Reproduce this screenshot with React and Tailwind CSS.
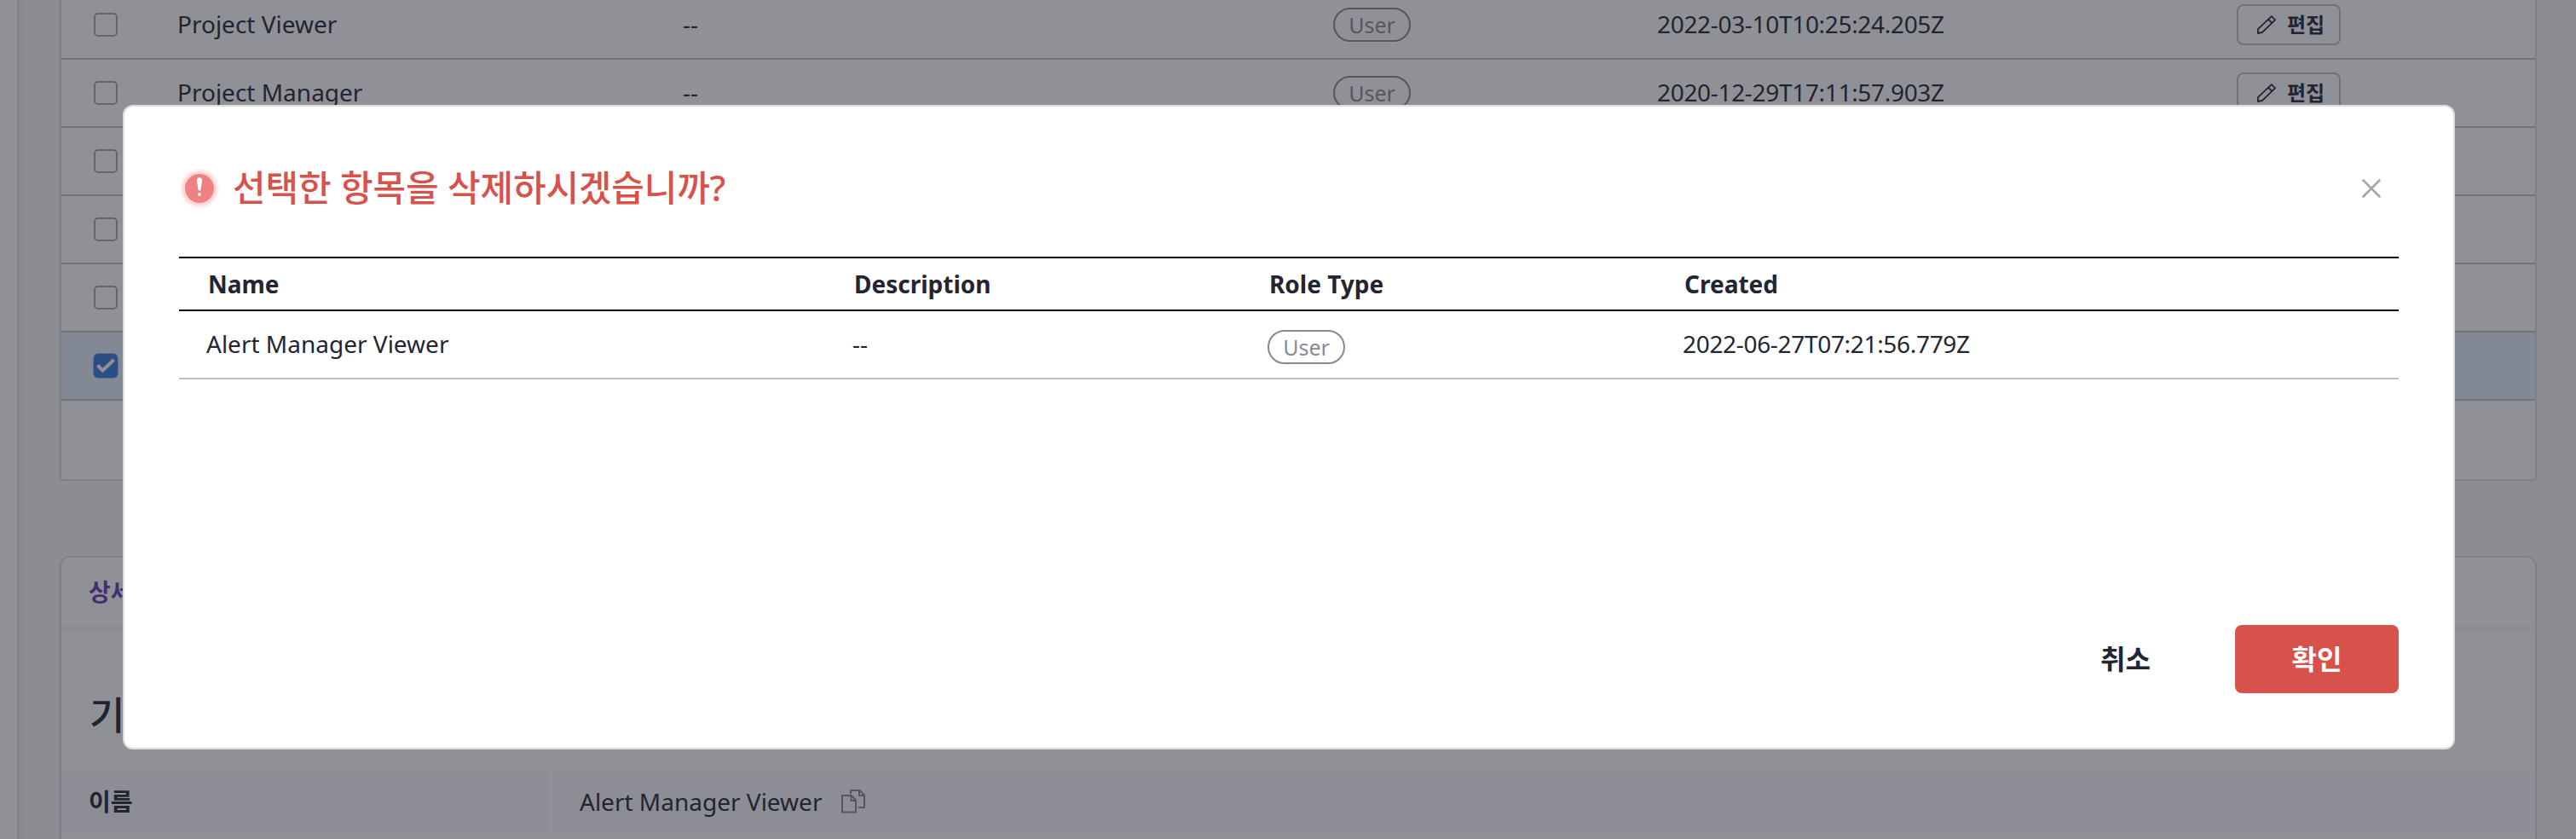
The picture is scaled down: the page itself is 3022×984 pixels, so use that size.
const Pencil = () => (
  <svg width="24" height="24" viewBox="0 0 24 24" fill="none" stroke="#232533" strokeWidth="1.8" strokeLinejoin="round" className="mb-px">
    <path d="M1.900 22v-4.800L17.800 2.100l4.300 4.300L7 20.900z" />
    <path d="M14 5.600l4.400 4.400" />
  </svg>
);

const Copy = () => (
  <svg width="28" height="28" viewBox="0 0 28 28" fill="none" stroke="#898995" strokeWidth="2">
    <path d="M1 7h11l5 5.500v14h-16z" />
    <path d="M11.500 7v6h5.500" />
    <path d="M11 5v-4h10.500l5.500 5.500v14.500h-7" />
    <path d="M21 1v6h6" />
  </svg>
);

const Alert = () => (
  <svg width="46" height="46" viewBox="0 0 46 46">
    <circle cx="23" cy="23" r="23" fill="#fdefef" />
    <circle cx="23" cy="23" r="20" fill="#fad6d6" />
    <circle cx="23" cy="23" r="17" fill="#ee8282" />
    <path d="M23 10.200c2 0 3.300 1.500 3.100 3.600l-1.500 10.200c-.2 2-2.900 2-3.200 0l-1.500-10.200c-.2-2.100 1.100-3.600 3.100-3.600z" fill="#fff" />
    <circle cx="23" cy="30" r="1.900" fill="#fff" />
  </svg>
);

const Badge = () => (
  <span className="flex h-10 w-[91px] items-center justify-center rounded-full border-2 border-[#898995] text-[25px] leading-none text-[#898995]">
    User
  </span>
);

const Box = ({ checked }) =>
  checked ? (
    <span className="flex size-7 items-center justify-center rounded-[5px] bg-[#3878dc] shadow-[0_0_0_1px_#3878dc66]">
      <svg width="22" height="18" viewBox="0 0 22 18" fill="none" stroke="#fff" strokeWidth="4">
        <path d="M1.500 8.500l6 6L20.500 2" />
      </svg>
    </span>
  ) : (
    <span className="size-7 rounded-[5px] border-2 border-[#a5a5ae]" />
  );

const rows = [
  { name: "Project Viewer", created: "2022-03-10T10:25:24.205Z" },
  { name: "Project Manager", created: "2020-12-29T17:11:57.903Z" },
  {},
  {},
  {},
  { checked: true },
];

const Row = ({ name, created, checked }) => (
  <div className={"flex h-20 shrink-0 items-center border-b-2 border-[#bfc0c6] pl-[38px] " + (checked ? "bg-[#e2effb]" : "")}>
    <div className="flex w-[98px]">
      <Box checked={checked} />
    </div>
    {name && (
      <>
        <div className="w-[593px] pb-0.5">{name}</div>
        <div className="w-[763px] pb-0.5">--</div>
        <div className="w-[380px]"><Badge /></div>
        <div className="w-[680px] pb-0.5 tracking-[-0.32px]">{created}</div>
        <div className="flex h-12 w-[122px] items-center gap-[12px] rounded-lg border-2 border-[#bfc0c6] pl-[21px] text-[24px] font-bold">
          <Pencil />
          <span className="pb-px leading-none">편집</span>
        </div>
      </>
    )}
  </div>
);

export default function App() {
  return (
    <div className="relative flex h-[984px] w-[3022px] overflow-hidden bg-[#f6f6f7] font-['Noto_Sans','Noto_Sans_CJK_KR',sans-serif] text-[28px] leading-[38px] text-[#232533]">
      <div className="w-[22px] shrink-0 border-r-2 border-[#dfdfe2] bg-white" />
      <div className="w-[48px] shrink-0 bg-linear-to-r from-[#eeeeef] to-[#f6f6f7] to-20%" />
      <main className="flex w-[2906px] shrink-0 flex-col">
        <section className="-mt-[10px] flex h-[574px] shrink-0 flex-col rounded-b border-2 border-t-0 border-[#dddde1] bg-white">
          {rows.map((r, i) => (
            <Row key={i} {...r} />
          ))}
        </section>
        <section className="mt-[88px] flex h-[400px] shrink-0 flex-col rounded-t-xl border-2 border-[#dddde1] bg-white">
          <div className="h-[88px] border-b-8 border-[#f7f7f8] pt-[21px] pl-[32px] font-bold text-[#6638b6]">상세 정보</div>
          <div className="h-[160px] pt-[69px] pl-[33px] text-[45px] leading-[56px] font-medium">기본 정보</div>
          <div className="flex h-[72px] shrink-0 items-center bg-[#f7f7fc]">
            <div className="flex h-full w-[576px] items-center border-r-4 border-white pt-1 pl-[32px] font-bold">이름</div>
            <div className="flex items-center gap-[23px] pl-[32px] pt-1">
              <span>Alert Manager Viewer</span>
              <Copy />
            </div>
          </div>
        </section>
      </main>

      <div className="absolute inset-0 flex bg-[#21232e]/50 pt-[123px] pl-[144px]">
        <div className="flex h-[756px] w-[2736px] flex-col rounded-xl border-2 border-[#dddde1] bg-white px-16 pt-[71px]">
          <header className="flex h-[50px] shrink-0 items-center pl-[1px]">
            <Alert />
            <h1 className="ml-[16px] flex-1 pb-0.5 text-[42px] leading-[50px] font-medium tracking-[-0.2px] text-[#d8524c]">선택한 항목을 삭제하시겠습니까?</h1>
            <svg width="24" height="24" viewBox="0 0 24 24" className="mr-[20px]" stroke="#a5a5ae" strokeWidth="2.600" strokeLinecap="round">
              <path d="M2.500 2.500l19 19M21.500 2.500l-19 19" />
            </svg>
          </header>
          <div className="mt-[55px] flex h-16 items-center border-y-2 border-black pl-[34px] font-bold">
            <div className="w-[758px]">Name</div>
            <div className="w-[487px]">Description</div>
            <div className="w-[487px]">Role Type</div>
            <div>Created</div>
          </div>
          <div className="flex h-20 items-center border-b-2 border-[#bfc0c6] pl-[32px]">
            <div className="w-[758px] pb-0.5">Alert Manager Viewer</div>
            <div className="w-[487px] pb-0.5">--</div>
            <div className="w-[487px] pt-1.5"><Badge /></div>
            <div className="pb-0.5 tracking-[-0.32px]">2022-06-27T07:21:56.779Z</div>
          </div>
          <footer className="mt-auto mb-16 flex h-20 items-center justify-end text-[32px] font-bold">
            <button className="mr-[99px] pb-px">취소</button>
            <button className="h-20 w-48 rounded-lg bg-[#d8524c] pb-px text-white">확인</button>
          </footer>
        </div>
      </div>
    </div>
  );
}
